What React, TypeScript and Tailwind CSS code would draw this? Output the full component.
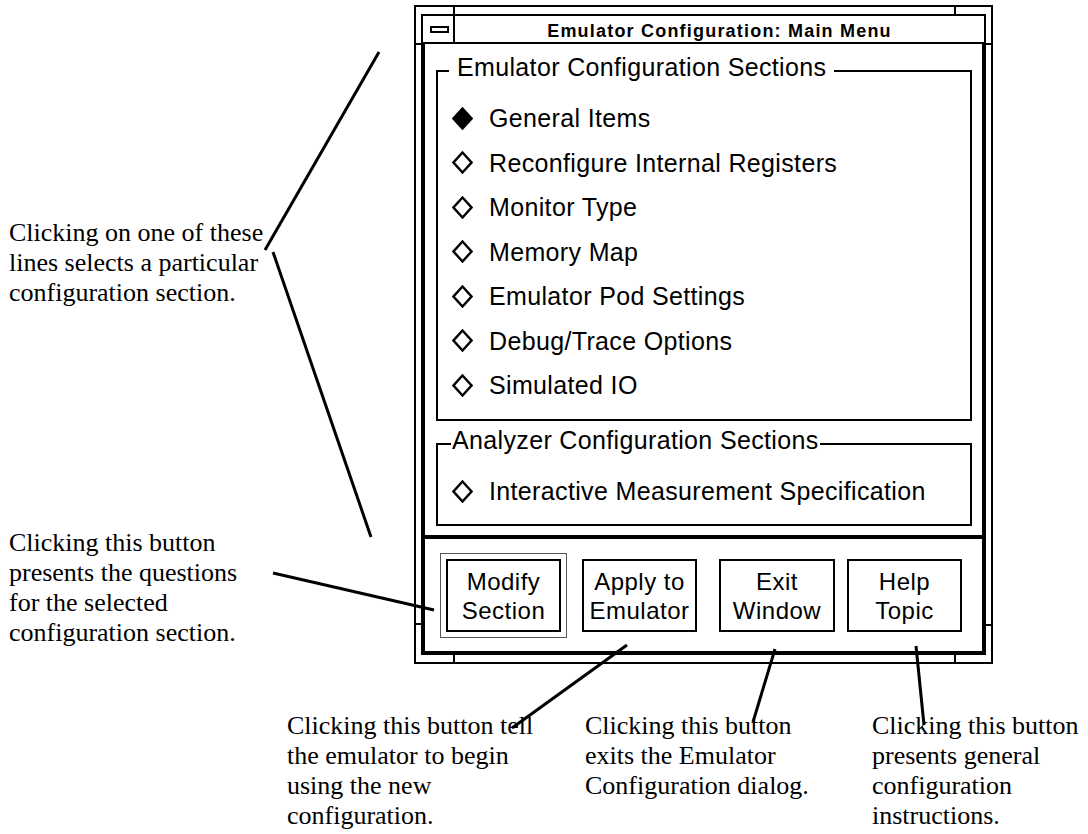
import React from 'react';

const emulatorSections = [
  'General Items',
  'Reconfigure Internal Registers',
  'Monitor Type',
  'Memory Map',
  'Emulator Pod Settings',
  'Debug/Trace Options',
  'Simulated IO',
];

const Diamond = ({ filled }: { filled?: boolean }) => (
  <svg width="21" height="23" viewBox="0 0 21 23" className="shrink-0">
    <polygon
      points="10.5,1.5 19.5,11.5 10.5,21.5 1.5,11.5"
      fill={filled ? 'black' : 'none'}
      stroke="black"
      strokeWidth="2.4"
    />
  </svg>
);

const Row = ({ label, selected }: { label: string; selected?: boolean }) => (
  <div className="flex items-center h-[44.5px] leading-[44.5px]">
    <Diamond filled={selected} />
    <span className="ml-[16px] whitespace-nowrap">{label}</span>
  </div>
);

interface ButtonProps {
  top: string;
  bottom: string;
  className?: string;
}

const MotifButton: React.FC<ButtonProps> = ({ top, bottom, className = '' }) => (
  <div
    className={`w-[115px] h-[73px] shrink-0 border-2 border-black flex flex-col items-center justify-center text-[24px] leading-[29px] tracking-[0.5px] ${className}`}
  >
    <span>{top}</span>
    <span>{bottom}</span>
  </div>
);

const ConfigWindow = () => (
  <div className="relative mt-[5px] w-[579px] h-[659px] shrink-0 border-2 border-black pt-[7px] pb-[7px] px-[5px] font-['Liberation_Sans',Arial,sans-serif]">
    {/* resize handle marks of the frame */}
    <div className="absolute top-0 left-[37px] w-[2px] h-[7px] bg-black" />
    <div className="absolute top-0 right-[35px] w-[2px] h-[7px] bg-black" />
    <div className="absolute bottom-0 left-[37px] w-[2px] h-[7px] bg-black" />
    <div className="absolute bottom-0 right-[35px] w-[2px] h-[7px] bg-black" />
    <div className="absolute left-0 top-[36px] w-[5px] h-[2px] bg-black" />
    <div className="absolute right-0 top-[36px] w-[5px] h-[2px] bg-black" />
    <div className="absolute left-0 bottom-[37px] w-[5px] h-[2px] bg-black" />
    <div className="absolute right-0 bottom-[36px] w-[5px] h-[2px] bg-black" />

    <div className="w-[565px] flex flex-col">
      {/* title bar */}
      <div className="h-[30px] border-2 border-black flex">
        <div className="w-[32px] border-r-2 border-black flex items-center justify-center pl-[3px]">
          <div className="w-[19px] h-[7px] border-2 border-black" />
        </div>
        <div className="flex-1 flex justify-center">
          <span className="mt-[4px] leading-[22px] text-[18px] font-bold tracking-[1.2px] whitespace-nowrap">
            Emulator Configuration: Main Menu
          </span>
        </div>
      </div>

      {/* window body */}
      <div className="border-4 border-t-0 border-black text-[25px] tracking-[0.35px]">
        <div className="pl-[11px] pr-[10px] pt-[10px] pb-[9px] border-b-4 border-black">
          <fieldset className="border-2 border-black">
            <legend className="ml-[11px] px-[8px] leading-[26px] pb-[8px] whitespace-nowrap">
              Emulator Configuration Sections
            </legend>
            <div className="pl-[14px] pt-[8px] pb-[11.5px]">
              {emulatorSections.map((s, i) => (
                <Row key={s} label={s} selected={i === 0} />
              ))}
            </div>
          </fieldset>

          <fieldset className="mt-[6px] border-2 border-black">
            <legend className="ml-[13px] px-[1px] leading-[26px] pb-[8px] whitespace-nowrap">
              Analyzer Configuration Sections
            </legend>
            <div className="pl-[14px] pt-[8px] pb-[10.5px]">
              <Row label="Interactive Measurement Specification" />
            </div>
          </fieldset>
        </div>

        <div className="flex items-center pl-[15px] pt-[14px] pb-[13px]">
          <div className="border border-[#555555] p-[5px]">
            <MotifButton top="Modify" bottom="Section" />
          </div>
          <MotifButton top="Apply to" bottom="Emulator" className="ml-[15px]" />
          <MotifButton top="Exit" bottom="Window" className="ml-[22px] w-[116px]" />
          <MotifButton top="Help" bottom="Topic" className="ml-[12px]" />
        </div>
      </div>
    </div>
  </div>
);

export default function App() {
  return (
    <div className="relative w-[1088px] h-[834px] bg-white text-black overflow-hidden">
      <div className="flex">
        <div className="w-[414px] shrink-0 pl-[9px] font-['Liberation_Serif','Times_New_Roman',serif] text-[26px] leading-[30px] whitespace-nowrap">
          <p className="mt-[218px]">
            Clicking on one of these
            <br />
            lines selects a particular
            <br />
            configuration section.
          </p>
          <p className="mt-[220px]">
            Clicking this button
            <br />
            presents the questions
            <br />
            for the selected
            <br />
            configuration section.
          </p>
        </div>
        <ConfigWindow />
      </div>

      <div className="flex mt-[47px] pl-[287px] font-['Liberation_Serif','Times_New_Roman',serif] text-[26px] leading-[30px] whitespace-nowrap">
        <p className="w-[298px] shrink-0">
          Clicking this button tell
          <br />
          the emulator to begin
          <br />
          using the new
          <br />
          configuration.
        </p>
        <p className="w-[287px] shrink-0">
          Clicking this button
          <br />
          exits the Emulator
          <br />
          Configuration dialog.
        </p>
        <p>
          Clicking this button
          <br />
          presents general
          <br />
          configuration
          <br />
          instructions.
        </p>
      </div>

      {/* leader lines */}
      <svg className="absolute inset-0 pointer-events-none" width="1088" height="834" viewBox="0 0 1088 834">
        <g stroke="black" strokeWidth="3" strokeLinecap="butt">
          <line x1="379" y1="52" x2="265" y2="250" />
          <line x1="273" y1="252" x2="371" y2="537" />
          <line x1="273" y1="573" x2="434" y2="610" />
          <line x1="627" y1="645" x2="512" y2="728" />
          <line x1="775" y1="649" x2="753" y2="722" />
          <line x1="916" y1="646" x2="924" y2="725" />
        </g>
      </svg>
    </div>
  );
}
